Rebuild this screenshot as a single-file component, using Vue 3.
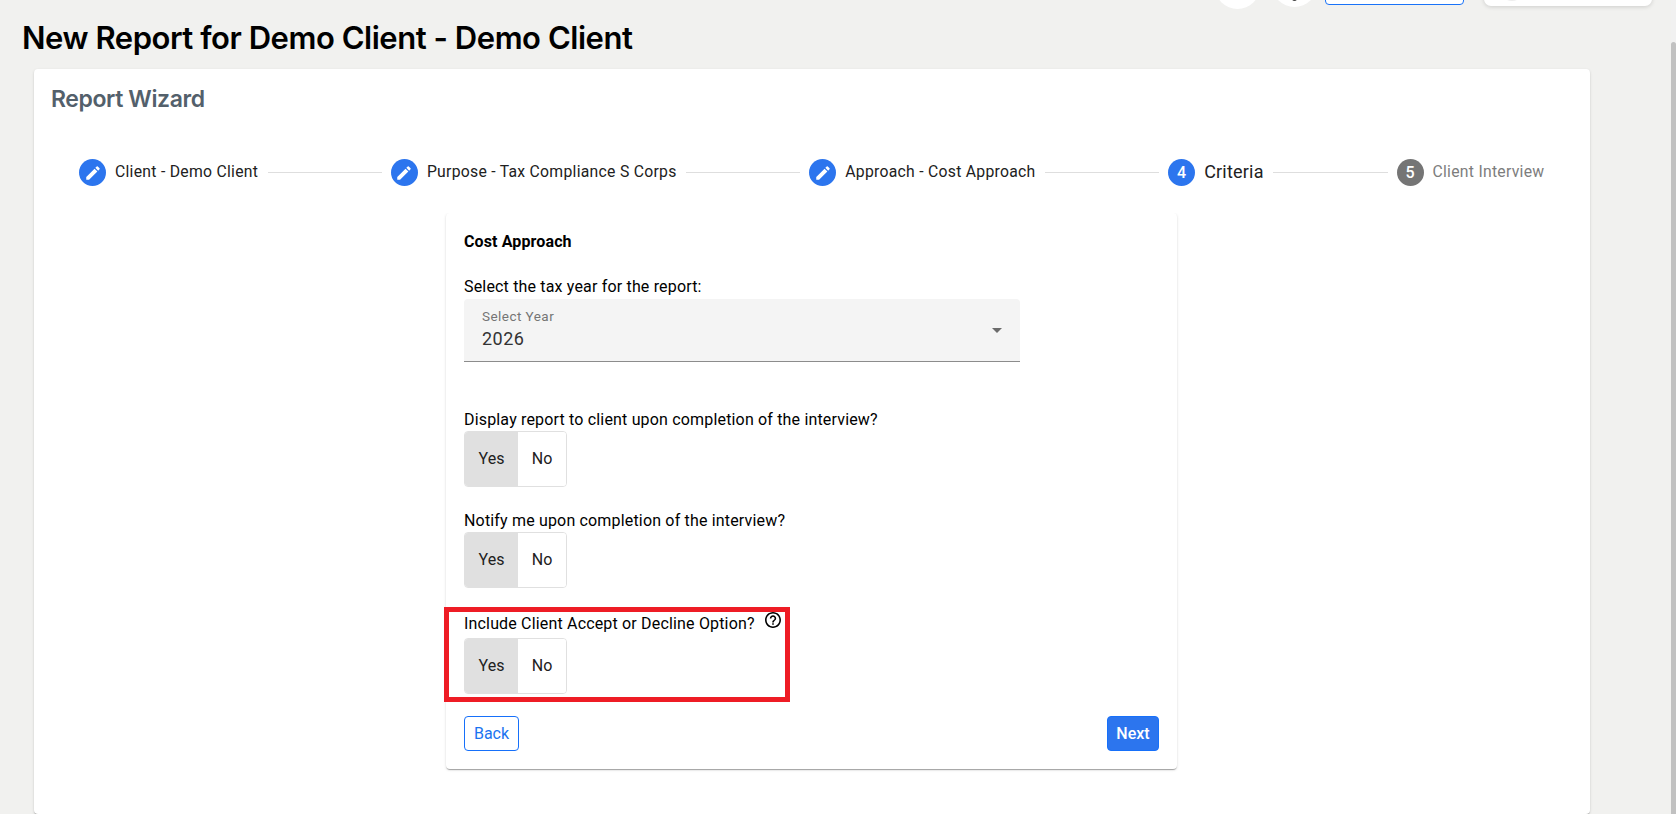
<script setup>
import { ref } from 'vue'

const steps = [
  { label: 'Client - Demo Client', state: 'done', width: 143.5 },
  { label: 'Purpose - Tax Compliance S Corps', state: 'done', width: 250 },
  { label: 'Approach - Cost Approach', state: 'done', width: 190.5 },
  { label: 'Criteria', state: 'active', width: 60 },
  { label: 'Client Interview', state: 'pending', width: 112.5 },
]

const year = ref('2026')
const displayReport = ref(true)
const notifyMe = ref(true)
const includeOption = ref(true)
</script>

<template>
  <div class="page">
    <div class="content">
      <header class="topbar">
        <span class="round-btn"></span>
        <span class="round-btn round-btn--second"><i class="dot"></i></span>
        <span class="outline-btn"></span>
        <span class="user-box"><i class="avatar"></i></span>
      </header>

      <h1 class="title">New Report for Demo Client - Demo Client</h1>

      <main class="wizard">
        <h2 class="wizard-title">Report Wizard</h2>

        <!-- Stepper -->
        <nav class="stepper">
          <template v-for="(step, i) in steps" :key="step.label">
            <span v-if="i" class="line"></span>
            <div class="step" :class="`step--${step.state}`">
              <span class="step-icon">
                <svg v-if="step.state === 'done'" viewBox="0 0 24 24" width="18" height="18">
                  <path
                    fill="currentColor"
                    d="M3 17.25V21h3.75L17.81 9.94l-3.75-3.75L3 17.25zM20.71 7.04a1 1 0 0 0 0-1.41l-2.34-2.34a1 1 0 0 0-1.41 0l-1.83 1.83 3.75 3.75 1.83-1.83z"
                  />
                </svg>
                <template v-else>{{ i + 1 }}</template>
              </span>
              <span class="step-label" :style="{ width: step.width + 'px' }">{{ step.label }}</span>
            </div>
          </template>
        </nav>

        <!-- Criteria form -->
        <section class="card">
          <h3 class="card-title">Cost Approach</h3>

          <p class="question question--year">Select the tax year for the report:</p>
          <div class="select">
            <div>
              <div class="select-label">Select Year</div>
              <div class="select-value">{{ year }}</div>
            </div>
            <svg class="caret" viewBox="0 0 10 5" width="10" height="5">
              <path fill="currentColor" d="M0 0h10L5 5z" />
            </svg>
          </div>

          <div class="field field--display">
            <p class="question">Display report to client upon completion of the interview?</p>
            <div class="toggle">
              <button :class="{ on: displayReport }" @click="displayReport = true">Yes</button>
              <button :class="{ on: !displayReport }" @click="displayReport = false">No</button>
            </div>
          </div>

          <div class="field">
            <p class="question">Notify me upon completion of the interview?</p>
            <div class="toggle">
              <button :class="{ on: notifyMe }" @click="notifyMe = true">Yes</button>
              <button :class="{ on: !notifyMe }" @click="notifyMe = false">No</button>
            </div>
          </div>

          <div class="highlight">
            <div class="option-row">
              <p class="question">Include Client Accept or Decline Option?</p>
              <svg class="help" viewBox="2 2 20 20" width="16" height="16">
                <path
                  fill="currentColor"
                  d="M11 18h2v-2h-2v2zm1-16C6.48 2 2 6.48 2 12s4.48 10 10 10 10-4.48 10-10S17.52 2 12 2zm0 18c-4.41 0-8-3.59-8-8s3.59-8 8-8 8 3.59 8 8-3.59 8-8 8zm0-14c-2.21 0-4 1.79-4 4h2c0-1.1.9-2 2-2s2 .9 2 2c0 2-3 1.75-3 5h2c0-2.25 3-2.5 3-5 0-2.21-1.79-4-4-4z"
                />
              </svg>
            </div>
            <div class="toggle">
              <button :class="{ on: includeOption }" @click="includeOption = true">Yes</button>
              <button :class="{ on: !includeOption }" @click="includeOption = false">No</button>
            </div>
          </div>

          <div class="actions">
            <button class="btn">Back</button>
            <button class="btn btn--primary">Next</button>
          </div>
        </section>
      </main>
    </div>
    <div class="scrollbar"><div class="thumb"></div></div>
  </div>
</template>

<style>
body {
  margin: 0;
  overflow: hidden;
}
</style>

<style scoped>
*,
*::before,
*::after {
  box-sizing: border-box;
  margin: 0;
  padding: 0;
}

.page {
  height: 814px;
  display: flex;
  background: #f1f1ef;
  color: #000;
  font-family: Roboto, 'Liberation Sans', sans-serif;
  font-size: 16px;
  overflow: hidden;
}

.content {
  flex: 1;
  min-width: 0;
}

button {
  font: inherit;
  letter-spacing: inherit;
  cursor: pointer;
}

/* Top bar, scrolled mostly out of view */
.topbar {
  height: 12px;
  padding: 0 19px 3px 0;
  display: flex;
  justify-content: flex-end;
  align-items: flex-end;
  overflow: hidden;
}
.round-btn {
  display: flex;
  justify-content: center;
  align-items: flex-end;
  width: 45px;
  height: 45px;
  margin-right: 12px;
  border-radius: 50%;
  background: #fff;
}
.round-btn--second {
  margin: 0 8px 2px 0;
}
.dot {
  width: 5px;
  height: 5px;
  margin-bottom: 6px;
  border-radius: 50%;
  background: #444;
}
.outline-btn {
  width: 139px;
  height: 36px;
  margin: 0 20px 4px 0;
  border: 1px solid #1a73f8;
  border-radius: 4px;
  background: #fff;
}
.user-box {
  display: flex;
  align-items: flex-end;
  width: 168px;
  height: 45px;
  margin-bottom: 3px;
  padding: 0 0 5px 16px;
  border-radius: 7px;
  background: #fff;
  box-shadow: 0 1px 4px rgba(0, 0, 0, 0.15);
}
.avatar {
  width: 24px;
  height: 24px;
  border-radius: 50%;
  background: #eee;
}

.title {
  height: 57px;
  padding-left: 22px;
  font-family: Inter, sans-serif;
  font-size: 31px;
  font-weight: 600;
  line-height: 51px;
  letter-spacing: -0.46px;
  white-space: nowrap;
}

/* Wizard */
.wizard {
  width: 1556px;
  height: 745px;
  margin-left: 34px;
  padding-top: 14px;
  border-radius: 4px;
  background: #fff;
  box-shadow:
    0 2px 1px -1px rgba(0, 0, 0, 0.2),
    0 1px 1px rgba(0, 0, 0, 0.14),
    0 1px 3px rgba(0, 0, 0, 0.12);
}
.wizard-title {
  padding-left: 17px;
  color: #53606b;
  font-family: Inter, sans-serif;
  font-size: 23px;
  font-weight: 600;
  line-height: 32px;
  letter-spacing: -0.4px;
}

.stepper {
  height: 27px;
  margin-top: 44px;
  padding: 0 45px;
  display: flex;
  align-items: center;
}
.line {
  flex: 1;
  height: 1px;
  margin: 0 9px;
  background: #dedede;
}
.step {
  display: flex;
  align-items: center;
  gap: 9px;
}
.step-icon {
  width: 27px;
  height: 27px;
  display: flex;
  align-items: center;
  justify-content: center;
  border-radius: 50%;
  background: #2c75ee;
  color: #fff;
  font-weight: 500;
}
.step-label {
  color: #212121;
  font-size: 15.75px;
  line-height: 20px;
  letter-spacing: 0.27px;
  padding-bottom: 1px;
  white-space: nowrap;
}
.step--active .step-label {
  font-size: 18px;
  letter-spacing: 0.2px;
}
.step--pending .step-icon {
  background: #757575;
}
.step--pending .step-label {
  color: #7d7d7d;
}

/* Form card */
.card {
  width: 731px;
  height: 556px;
  margin: 27px 0 0 412px;
  padding: 19px 18px 18px;
  border-radius: 4px;
  background: #fff;
  box-shadow:
    0 2px 1px -1px rgba(0, 0, 0, 0.2),
    0 1px 1px rgba(0, 0, 0, 0.14),
    0 1px 3px rgba(0, 0, 0, 0.12);
  clip-path: inset(0 -6px -6px -6px);
}
.card-title {
  font-size: 16px;
  font-weight: 700;
  line-height: 20px;
  letter-spacing: 0.12px;
}
.question {
  line-height: 20px;
  letter-spacing: 0.17px;
  white-space: nowrap;
}
.question--year {
  margin-top: 25px;
}

.select {
  width: 556px;
  height: 63px;
  margin-top: 2px;
  padding: 8px 18px 0;
  display: flex;
  justify-content: space-between;
  border-bottom: 1px solid #8c8c8c;
  border-radius: 4px 4px 0 0;
  background: #f4f4f4;
}
.select-label {
  color: #757575;
  font-size: 13.5px;
  line-height: 18px;
  letter-spacing: 0.45px;
}
.select-value {
  color: #333;
  font-size: 18px;
  line-height: 28px;
  letter-spacing: 0.5px;
}
.caret {
  margin-top: 21px;
  color: #6b6b6b;
}

.field {
  margin-top: 24px;
}
.field--display {
  margin-top: 48px;
}
.toggle {
  width: 103px;
  height: 56px;
  margin-top: 1px;
  display: flex;
  border: 1px solid #e0e0e0;
  border-radius: 4px;
  overflow: hidden;
}
.toggle button {
  flex: 0 0 48px;
  border: none;
  background: #fff;
  color: #212121;
  padding-bottom: 1px;
}
.toggle button:first-child {
  flex-basis: 53px;
}
.toggle .on {
  background: #e0e0e0;
}

.highlight {
  width: 346px;
  height: 95px;
  margin: 19px 0 0 -20px;
  padding: 0 15px;
  border: 5px solid #ee1c25;
}
.highlight .toggle {
  margin-top: 4px;
}
.option-row {
  height: 22px;
  padding-top: 2px;
  display: flex;
  align-items: flex-start;
  justify-content: space-between;
  width: 317px;
}
.help {
  margin-top: -2px;
}

.actions {
  margin-top: 14px;
  display: flex;
  justify-content: space-between;
}
.btn {
  width: 55px;
  height: 35px;
  border: 1px solid #1670fa;
  border-radius: 4px;
  background: #fff;
  color: #1a73f0;
}
.btn--primary {
  width: 52px;
  background: #2c75ee;
  color: #fff;
  font-weight: 500;
}

.scrollbar {
  width: 5px;
  padding-top: 42px;
  background: #f1f1f1;
}
.thumb {
  height: 100%;
  border-radius: 3px 3px 0 0;
  background: #c1c1c1;
}
</style>
